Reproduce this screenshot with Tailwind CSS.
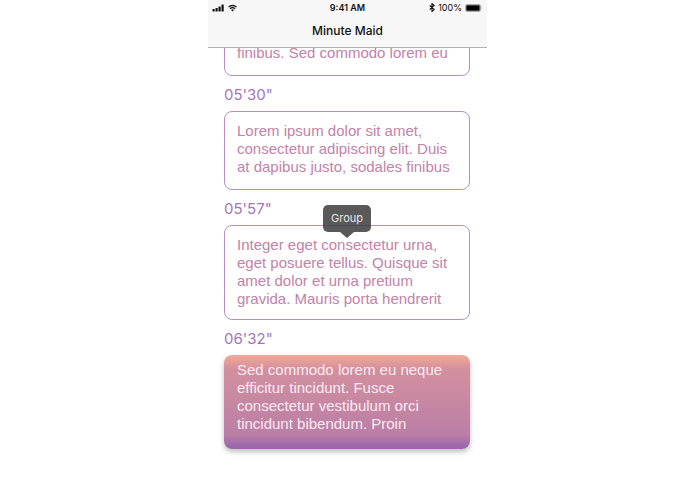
<!DOCTYPE html>
<html lang="en">
<head>
    <meta charset="UTF-8">
    <meta name="viewport" content="width=device-width, initial-scale=1.0">
    <title>Minute Maid</title>
    <script src="https://cdn.jsdelivr.net/npm/@tailwindcss/browser@4"></script>
</head>
<body class="bg-white font-['Inter',sans-serif]">
    <div class="mx-auto w-full max-w-[279px]">
        <!-- Navigation bar -->
        <header class="relative z-10 border-b border-[#b2b2b4] bg-[#f7f7f7] text-[#111111]">
            <div class="grid grid-cols-3 items-center px-1 text-[9px] leading-[15px]">
                <div class="flex items-center gap-1">
                    <svg class="h-2 w-3" viewBox="0 0 12 8" fill="currentColor" aria-label="Signal">
                        <rect x="0.5" y="5" width="2.2" height="2.5" rx="0.5"/>
                        <rect x="3.5" y="4" width="2.2" height="3.5" rx="0.5"/>
                        <rect x="6.5" y="2.5" width="2.2" height="5" rx="0.5"/>
                        <rect x="9.5" y="0.5" width="2.2" height="7" rx="0.5"/>
                    </svg>
                    <svg class="h-2 w-[9px]" viewBox="0 0 18 16" fill="none" stroke="currentColor" stroke-width="2.6" aria-label="Wi-Fi">
                        <path d="M1 6.2a11.5 11.5 0 0 1 16 0"/>
                        <path d="M4 9.6a7.2 7.2 0 0 1 10 0"/>
                        <path d="M9 15l-2.8-2.9a4 4 0 0 1 5.6 0z" fill="currentColor" stroke="none"/>
                    </svg>
                </div>
                <span class="text-center font-semibold">9:41 AM</span>
                <div class="flex items-center justify-end gap-[3px]">
                    <svg class="h-[9px] w-[6px]" viewBox="0 0 12 18" fill="none" stroke="currentColor" stroke-width="2.2" aria-label="Bluetooth">
                        <path d="M1.5 5l9 8L6 16.8V1.2L10.5 5l-9 8"/>
                    </svg>
                    <span>100%</span>
                    <svg class="h-2 w-[18px]" viewBox="0 0 18 8" aria-label="Battery">
                        <rect x="0.5" y="0.5" width="15" height="7" rx="1.5" fill="none" stroke="#777777" stroke-width="0.6"/>
                        <rect x="1.3" y="1.3" width="13.4" height="5.4" rx="0.8" fill="#000000"/>
                        <path d="M16.3 2.8q1.2 1.2 0 2.4z" fill="#777777"/>
                    </svg>
                </div>
            </div>
            <h1 class="text-center text-xs leading-8 font-medium">Minute Maid</h1>
        </header>

        <!-- Transcript -->
        <main class="-mt-[15px] pr-[17px] pl-4 pb-8 font-['Liberation_Sans',Arial,sans-serif] text-[15px] leading-[18px] text-[#c382a7]">
            <section class="min-h-[43px] rounded-lg border border-[#b58fc5] px-3 py-[10px]">
                <p>finibus. Sed commodo lorem eu</p>
            </section>

            <h2 class="pt-0.5 font-['Inter',sans-serif] text-[15px] leading-[33px] text-[#a377b5]">05'30"</h2>
            <section class="min-h-[79px] rounded-lg border border-[#b58fc5] px-3 py-[10px]">
                <p>Lorem ipsum dolor sit amet,<br>consectetur adipiscing elit. Duis<br>at dapibus justo, sodales finibus</p>
            </section>

            <h2 class="pt-0.5 font-['Inter',sans-serif] text-[15px] leading-[33px] text-[#a377b5]">05'57"</h2>
            <section class="relative min-h-[95px] rounded-lg border border-[#b58fc5] px-3 py-[10px]">
                <!-- Tooltip -->
                <div role="tooltip" class="absolute bottom-full left-1/2 -mb-3 flex -translate-x-1/2 flex-col items-center font-['Inter',sans-serif]">
                    <span class="rounded-[5px] bg-[#3c3c3c]/85 px-2 text-[11px] leading-[27px] text-[#e6e6e6]">Group</span>
                    <svg class="h-[6px] w-[14px]" viewBox="0 0 14 6" fill="#3c3c3c" fill-opacity="0.85" aria-hidden="true">
                        <path d="M0 0h14L7 6z"/>
                    </svg>
                </div>
                <p>Integer eget consectetur urna,<br>eget posuere tellus. Quisque sit<br>amet dolor et urna pretium<br>gravida. Mauris porta hendrerit</p>
            </section>

            <h2 class="pt-0.5 font-['Inter',sans-serif] text-[15px] leading-[33px] text-[#a377b5]">06'32"</h2>
            <section class="min-h-[94px] rounded-lg bg-[linear-gradient(to_bottom,#f0a596_2%,#d2909f_15%,#bb7ea6_85%,#9c68ac_97%)] px-[13px] py-[6px] text-[#fbeaf2] shadow-[0_3px_5px_rgba(0,0,0,0.25)]">
                <p>Sed commodo lorem eu neque<br>efficitur tincidunt. Fusce<br>consectetur vestibulum orci<br>tincidunt bibendum. Proin</p>
            </section>
        </main>
    </div>
</body>
</html>
